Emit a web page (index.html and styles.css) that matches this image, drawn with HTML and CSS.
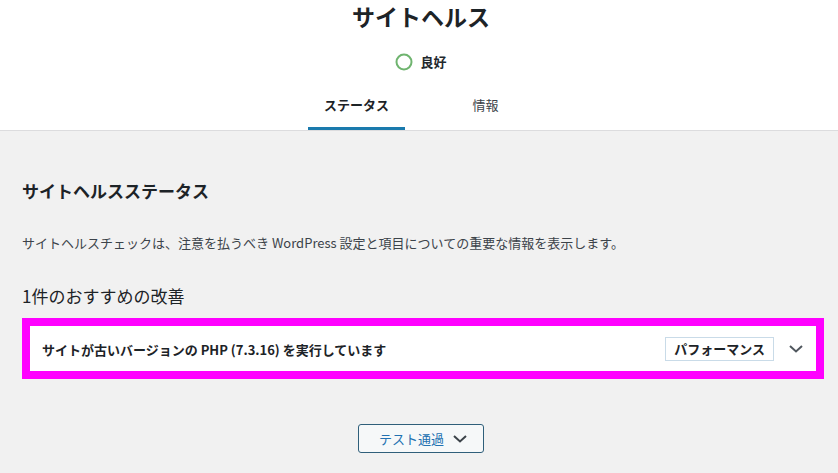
FILE: index.html
```html
<!DOCTYPE html>
<html lang="ja">
<head>
<meta charset="utf-8">
<title>サイトヘルス</title>
<link rel="stylesheet" href="styles.css">
</head>
<body>
<header class="hc-header">
  <h1 class="hc-title">サイトヘルス</h1>
  <div class="hc-status">
    <svg class="hc-ring" width="18" height="18" viewBox="0 0 18 18"><circle cx="9" cy="9" r="7.5" fill="none" stroke="#6fb46f" stroke-width="2"/></svg>
    <span class="hc-status-label">良好</span>
  </div>
  <nav class="hc-tabs">
    <a class="hc-tab active">ステータス</a>
    <a class="hc-tab">情報</a>
  </nav>
</header>
<main class="hc-body">
  <h2 class="hc-h2">サイトヘルスステータス</h2>
  <p class="hc-desc">サイトヘルスチェックは、注意を払うべき WordPress 設定と項目についての重要な情報を表示します。</p>
  <h3 class="hc-h3">1件のおすすめの改善</h3>
  <div class="hc-card">
    <span class="hc-card-title">サイトが古いバージョンの PHP (7.3.16) を実行しています</span>
    <span class="hc-badge">パフォーマンス</span>
    <svg class="hc-chev" width="14" height="8" viewBox="0 0 14 8"><path d="M1 1 L7 6.5 L13 1" fill="none" stroke="#50575e" stroke-width="2"/></svg>
  </div>
  <div class="hc-actions">
    <button class="hc-button">テスト通過
      <svg class="hc-btn-chev" width="14" height="8" viewBox="0 0 14 8"><path d="M1 1 L7 6.5 L13 1" fill="none" stroke="#3c434a" stroke-width="2"/></svg>
    </button>
  </div>
</main>
</body>
</html>
```

FILE: styles.css
```css
* { box-sizing: border-box; }
body {
  margin: 0;
  background: #f1f1f1;
  font-family: "Noto Sans CJK JP", "Noto Sans", sans-serif;
  color: #23282d;
}
.hc-header {
  background: #fff;
  border-bottom: 1px solid #dcdcde;
  text-align: center;
  padding-left: 4px;
  height: 131px;
}
.hc-title {
  margin: 0;
  font-size: 23px;
  line-height: 32px;
  font-weight: 700;
  color: #1d2327;
}
.hc-status {
  margin-top: 20px;
  height: 20px;
  display: flex;
  justify-content: center;
  align-items: center;
  gap: 7px;
}
.hc-ring { display: block; }
.hc-status-label {
  font-size: 13px;
  font-weight: 700;
  line-height: 20px;
  color: #23282d;
}
.hc-tabs {
  display: inline-grid;
  grid-template-columns: 1fr 1fr;
  margin-top: 23px;
}
.hc-tab {
  display: block;
  width: 97px;
  margin: 0 16px;
  font-size: 13px;
  line-height: 20px;
  padding-bottom: 12px;
  border-bottom: 3px solid transparent;
  color: #3c434a;
}
.hc-tab.active {
  font-weight: 700;
  color: #1d2327;
  border-bottom-color: #1a7aad;
}
.hc-body {
  padding: 48px 14px 0 22px;
}
.hc-h2 {
  margin: 0;
  font-size: 17px;
  line-height: 24px;
  font-weight: 700;
  color: #1d2327;
}
.hc-desc {
  margin: 30px 0 0;
  font-size: 13px;
  line-height: 20px;
  color: #3c434a;
}
.hc-h3 {
  margin: 31px 0 0;
  font-size: 17px;
  line-height: 24px;
  font-weight: 400;
  color: #1d2327;
}
.hc-card {
  margin-top: 10px;
  background: #fff;
  border: 8px solid #f0f;
  height: 61px;
  display: flex;
  align-items: center;
  padding: 0 13px 0 12px;
}
.hc-card-title {
  flex: 1;
  font-size: 13px;
  font-weight: 700;
  line-height: 20px;
  color: #1d2327;
  padding-top: 2px;
}
.hc-badge {
  border: 1px solid #c9dbe8;
  font-size: 13px;
  font-weight: 700;
  line-height: 22px;
  padding: 0 8px;
  color: #1d2327;
  margin-right: 15px;
}
.hc-chev { display: block; }
.hc-actions {
  margin-top: 45px;
  display: flex;
  justify-content: center;
  padding-right: 4px;
}
.hc-button {
  width: 126px;
  height: 29px;
  border: 1px solid #2f5f7a;
  border-radius: 3px;
  background: #f6f8f9;
  color: #2271b1;
  font-family: "Noto Sans CJK JP", "Noto Sans", sans-serif;
  font-size: 13px;
  display: flex;
  align-items: center;
  justify-content: center;
  gap: 9px;
  padding: 0 0 0 4px;
}
.hc-btn-chev { display: block; }
```
